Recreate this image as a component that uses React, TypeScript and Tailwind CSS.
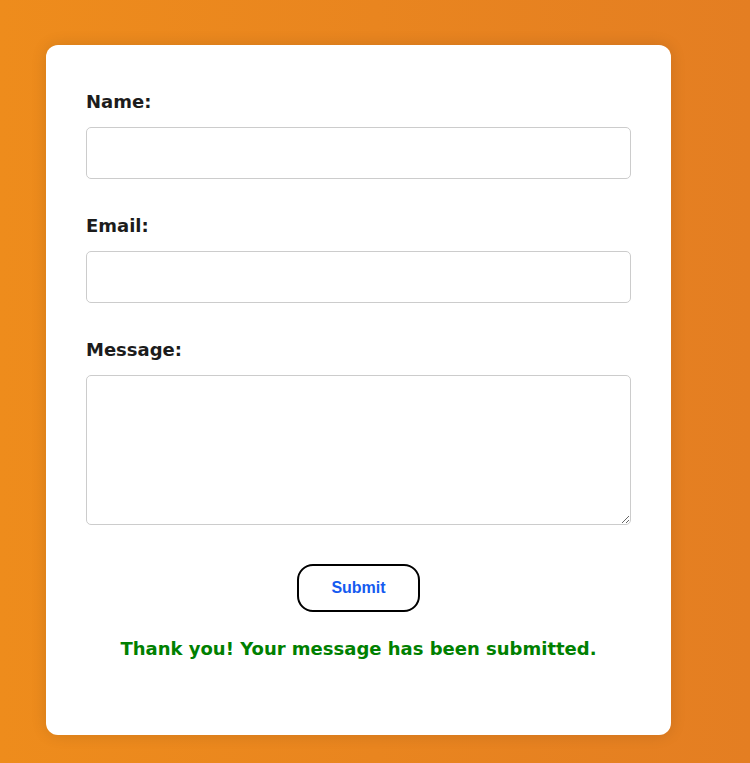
import React from "react";

export default function App() {
  return (
    <div className="min-h-[763px] w-full bg-[linear-gradient(90deg,#ee8c1c,#e47e22)] pt-[45px] pl-[46px] [font-family:'DejaVu_Sans',sans-serif]">
      <div className="w-[625px] h-[690px] bg-white rounded-[12px] shadow-[0_0_16px_rgba(0,0,0,0.12)] px-[40px] pt-[44px]">
        <label className="block text-[18px] leading-[25px] font-bold text-[#1c1c1c] mb-[13px]">Name:</label>
        <input className="block w-full h-[52px] border border-[#cccccc] rounded-[5px] bg-white mb-[34px]" />
        <label className="block text-[18px] leading-[25px] font-bold text-[#1c1c1c] mb-[13px]">Email:</label>
        <input className="block w-full h-[52px] border border-[#cccccc] rounded-[5px] bg-white mb-[34px]" />
        <label className="block text-[18px] leading-[25px] font-bold text-[#1c1c1c] mb-[13px]">Message:</label>
        <textarea className="block w-full h-[150px] border border-[#cccccc] rounded-[5px] bg-white resize-y" />
        <div className="flex justify-center mt-[39px]">
          <button className="w-[123px] h-[48px] border-2 border-black rounded-[16px] bg-white text-[#155bf0] text-[16px] font-bold [font-family:'Liberation_Sans',Arial,sans-serif]">
            Submit
          </button>
        </div>
        <p className="mt-[24px] text-center text-[18px] leading-[25px] font-bold text-[#008000]">
          Thank you! Your message has been submitted.
        </p>
      </div>
    </div>
  );
}
